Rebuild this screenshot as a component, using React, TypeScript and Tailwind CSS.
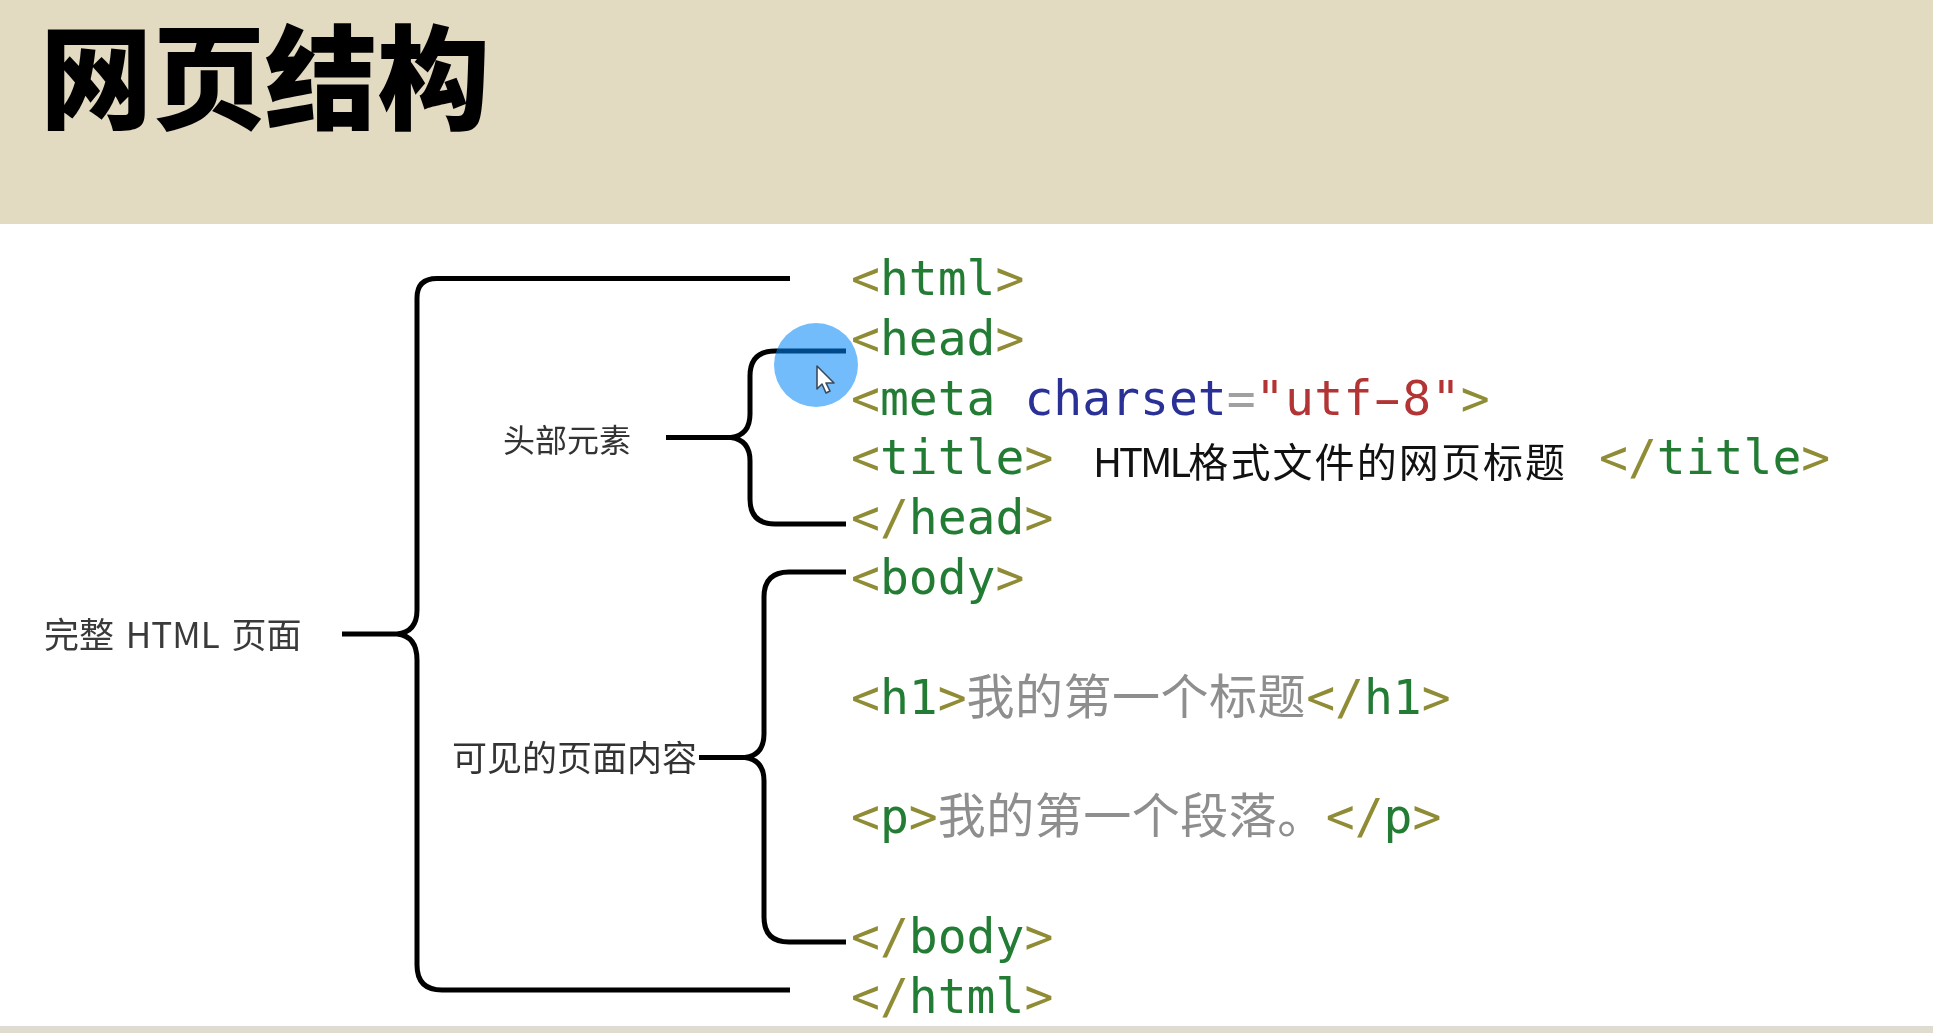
import React from "react";

const B = ({ children }: { children: React.ReactNode }) => <span className="text-[#8f8c35]">{children}</span>;
const N = ({ children }: { children: React.ReactNode }) => <span className="text-[#237c34]">{children}</span>;
const Line = ({ children }: { children?: React.ReactNode }) => <div className="h-[59.8px] leading-[59.8px] whitespace-pre">{children}</div>;
const Zh = ({ children }: { children: React.ReactNode }) => <span className="text-[#8e8e8e] tracking-[0.5px]">{children}</span>;

export default function App() {
  return (
    <div className="h-[1033px] w-full flex flex-col overflow-hidden bg-white font-['Noto_Sans_CJK_SC',sans-serif]">
      <header className="h-[224px] shrink-0 bg-[#e3dac2] pl-[40px] pt-[6px]">
        <h1 className="text-[112.5px] leading-[130px] font-black text-black blur-[0.3px]">网页结构</h1>
      </header>
      <main className="relative flex-1 bg-white">
        <svg className="absolute left-0 top-0 blur-[0.4px]" width="1933" height="799" viewBox="0 224 1933 799" fill="none" stroke="#000" strokeWidth="5">
          <path d="M790 278.5H437Q417 278.5 417 298V610Q417 632 397 634H342M397 634Q417 636 417 660V965Q417 990 442 990H790" />
          <path d="M846 351H775Q750 351 750 376V414Q750 435 731 437.5H666M731 437.5Q750 440 750 461V499Q750 524 775 524H846" />
          <path d="M846 572H789Q764 572 764 597V734Q764 755 745 757.5H699M745 757.5Q764 760 764 781V917Q764 942 789 942H846" />
        </svg>
        <span className="absolute left-[44px] top-[387px] text-[35px] leading-[44px] text-[#3a3a3a] whitespace-pre [word-spacing:4px] blur-[0.3px]">完整 HTML 页面</span>
        <span className="absolute left-[503px] top-[193px] text-[32px] leading-[42px] text-[#333] blur-[0.3px]">头部元素</span>
        <span className="absolute left-[452px] top-[510px] text-[35px] leading-[44px] text-[#333] blur-[0.3px]">可见的页面内容</span>

        <div className="ml-[851px] pt-[25px] text-[48px] font-['DejaVu_Sans_Mono','Noto_Sans_CJK_SC',monospace] blur-[0.4px]">
          <Line><B>&lt;</B><N>html</N><B>&gt;</B></Line>
          <Line><B>&lt;</B><N>head</N><B>&gt;</B></Line>
          <Line>
            <B>&lt;</B><N>meta</N> <span className="text-[#2a3196]">charset</span><span className="text-[#a0a0a0]">=</span>
            <span className="text-[#b23434] tracking-[0.4px]">"utf<span className="inline-block scale-x-[1.75]">-</span>8"</span><B>&gt;</B>
          </Line>
          <Line>
            <B>&lt;</B><N>title</N><B>&gt;</B>
          </Line>
          <Line><B>&lt;/</B><N>head</N><B>&gt;</B></Line>
          <Line><B>&lt;</B><N>body</N><B>&gt;</B></Line>
          <Line />
          <Line><B>&lt;</B><N>h1</N><B>&gt;</B><Zh>我的第一个标题</Zh><B>&lt;/</B><N>h1</N><B>&gt;</B></Line>
          <Line />
          <Line><B>&lt;</B><N>p</N><B>&gt;</B><Zh>我的第一个段落。</Zh><B>&lt;/</B><N>p</N><B>&gt;</B></Line>
          <Line />
          <Line><B>&lt;/</B><N>body</N><B>&gt;</B></Line>
          <Line><B>&lt;/</B><N>html</N><B>&gt;</B></Line>
        </div>

        <span className="absolute left-[1093px] top-[211px] text-[40px] leading-[50px] text-[#111] whitespace-pre blur-[0.3px]"><span className="tracking-[-3px]">HTML</span><span className="tracking-[2.1px]">格式文件的网页标题</span></span>
        <span className="absolute left-[1599px] top-[204px] text-[48px] leading-[59.8px] font-['DejaVu_Sans_Mono',monospace] whitespace-pre blur-[0.4px]"><B>&lt;/</B><N>title</N><B>&gt;</B></span>

        <div className="absolute left-[774px] top-[99px] h-[84px] w-[84px] rounded-full bg-[#0085f7]/55" />
        <svg className="absolute left-[814px] top-[140px]" width="24" height="32" viewBox="0 0 24 32">
          <path d="M3 2V25L8 20L12 29L16 27L12 19H20Z" fill="#fff" stroke="#3a4a5c" strokeWidth="1.6" strokeLinejoin="round" />
        </svg>
      </main>
      <footer className="h-[10px] shrink-0 bg-linear-to-b from-[#dddbd6] to-[#e4dcc3]" />
    </div>
  );
}
